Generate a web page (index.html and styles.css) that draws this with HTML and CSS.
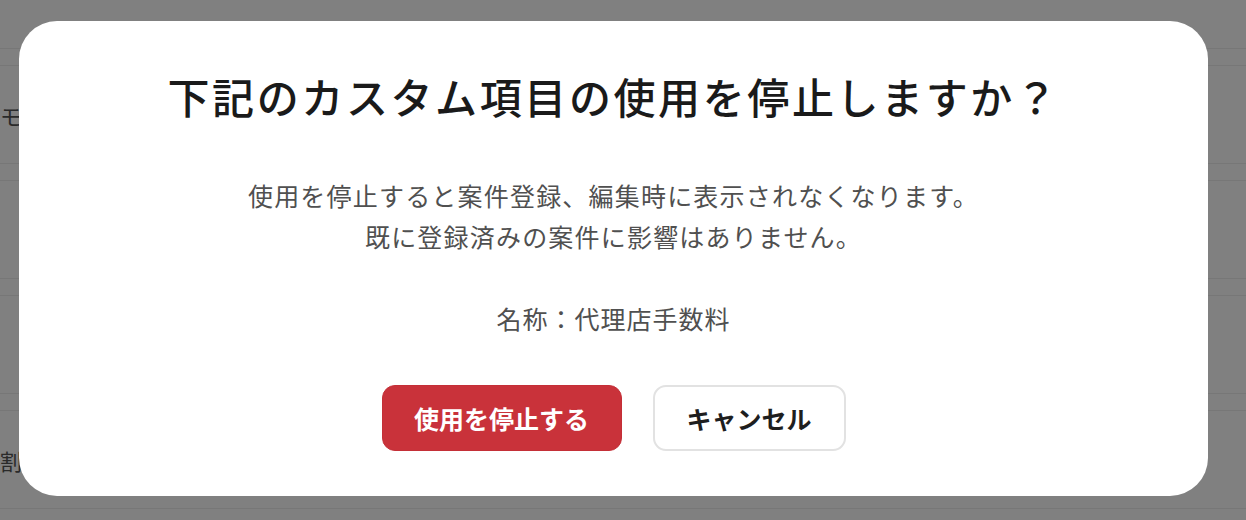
FILE: index.html
```html
<!DOCTYPE html>
<html lang="ja">
<head>
    <meta charset="UTF-8">
    <meta name="viewport" content="width=device-width, initial-scale=1.0">
    <title>カスタム項目</title>
    <link rel="stylesheet" href="styles.css">
</head>
<body>
    <div class="page">
        <div class="row row-first"></div>
        <div class="row"><span class="cell">モ</span></div>
        <div class="row"></div>
        <div class="row"></div>
        <div class="row"><span class="cell">割</span></div>
    </div>

    <div class="overlay">
        <div class="modal">
            <h2 class="modal-title">下記のカスタム項目の使用を停止しますか？</h2>
            <p class="modal-text">使用を停止すると案件登録、編集時に表示されなくなります。<br>既に登録済みの案件に影響はありません。</p>
            <p class="modal-name">名称：代理店手数料</p>
            <div class="modal-actions">
                <button class="btn btn-danger">使用を停止する</button>
                <button class="btn btn-cancel">キャンセル</button>
            </div>
        </div>
    </div>
</body>
</html>
```

FILE: styles.css
```css
* {
    margin: 0;
    padding: 0;
    box-sizing: border-box;
}

body {
    background: #808080;
    color: #222;
    font-family: "Noto Sans CJK JP", "Noto Sans", sans-serif;
    height: 100vh;
    overflow: hidden;
}

/* dimmed list behind the dialog */
.page {
    display: flex;
    flex-direction: column;
    gap: 16px;
    margin-top: -50px;
}

.row {
    height: 99px;
    border-top: 1px solid #777;
    border-bottom: 1px solid #777;
    display: flex;
    align-items: center;
}

.cell {
    font-size: 22px;
    color: #2a2a2a;
}

.overlay {
    position: fixed;
    inset: 0;
    padding: 21px 38px 24px 19px;
    display: flex;
}

.modal {
    flex: 1;
    background: #fff;
    border-radius: 38px;
    display: flex;
    flex-direction: column;
    align-items: center;
    padding-top: 45px;
}

.modal-title {
    font-size: 42px;
    font-weight: 500;
    line-height: 59px;
    color: #1a1a1a;
    letter-spacing: 2.6px;
}

.modal-text {
    margin-top: 50px;
    font-size: 25px;
    line-height: 41px;
    color: #505050;
    letter-spacing: 1.2px;
    text-align: center;
}

.modal-name {
    margin-top: 41px;
    font-size: 25px;
    line-height: 41px;
    color: #505050;
    letter-spacing: 1px;
}

.modal-actions {
    display: flex;
    gap: 31px;
    margin-top: 46px;
}

.btn {
    height: 66px;
    font-family: inherit;
    font-size: 25px;
    font-weight: 700;
    border-radius: 13px;
    cursor: pointer;
}

.btn-danger {
    width: 240px;
    background: #c9323a;
    border: 1px solid #c42f37;
    color: #fff;
}

.btn-cancel {
    width: 193px;
    background: #fff;
    border: 2px solid #e2e2e2;
    color: #1e1e1e;
}
```
